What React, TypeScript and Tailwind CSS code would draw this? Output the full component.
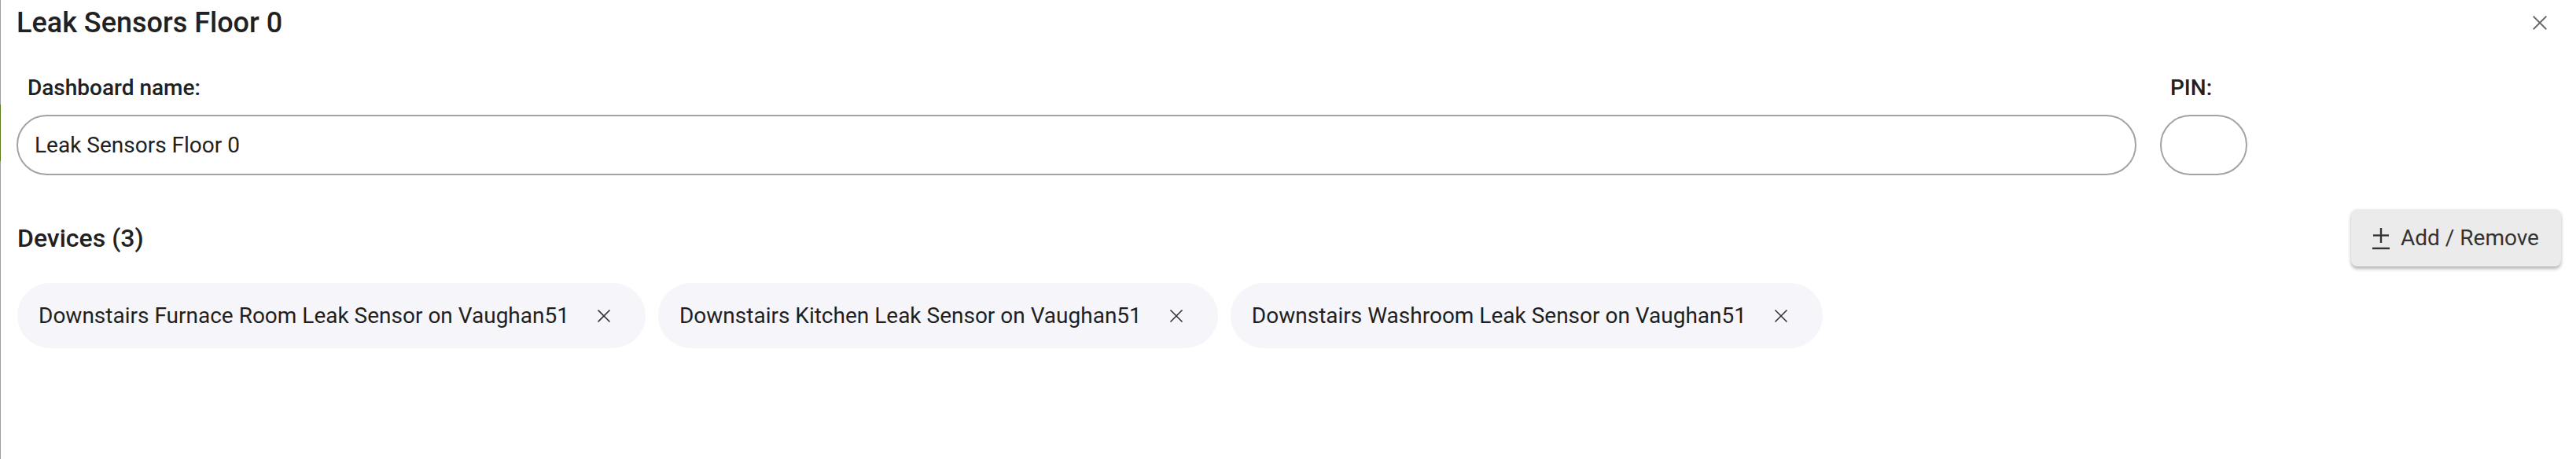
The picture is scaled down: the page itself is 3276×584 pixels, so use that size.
const devices = [
  "Downstairs Furnace Room Leak Sensor on Vaughan51",
  "Downstairs Kitchen Leak Sensor on Vaughan51",
  "Downstairs Washroom Leak Sensor on Vaughan51",
];

function CloseIcon({ className }: { className?: string }) {
  return (
    <svg viewBox="0 0 24 24" className={className} fill="none" stroke="currentColor" strokeWidth="2">
      <line x1="3" y1="3" x2="21" y2="21" />
      <line x1="21" y1="3" x2="3" y2="21" />
    </svg>
  );
}

function PlusMinusIcon() {
  return (
    <svg width="22" height="30" viewBox="0 0 22 30" fill="none" stroke="currentColor" strokeWidth="2.4">
      <line x1="11" y1="2" x2="11" y2="21" />
      <line x1="1" y1="11.5" x2="21" y2="11.5" />
      <line x1="0" y1="28" x2="22" y2="28" />
    </svg>
  );
}

function Chip({ label }: { label: string }) {
  return (
    <div className="flex h-[83px] items-center rounded-full bg-[#f6f6fa] pl-[27px] pr-[35px]">
      <span className="text-[28px] leading-[32px] text-[#1f1f1f]">{label}</span>
      <button className="ml-[26px] flex h-[36px] w-[36px] items-center justify-center text-[#333]" aria-label="Remove">
        <CloseIcon className="h-[20px] w-[20px]" />
      </button>
    </div>
  );
}

export default function App() {
  return (
    <div className="flex h-[584px] w-[3276px] bg-white font-['Roboto',sans-serif] text-[#212121]">
      <div className="flex w-px flex-col">
        <div className="h-[133px] bg-[#9e9e9e]" />
        <div className="h-[72px] bg-[#5b7f1e]" />
        <div className="flex-1 bg-[#9e9e9e]" />
      </div>

      <div className="flex flex-1 flex-col pl-[20px] pr-[19px]">
        <div className="mt-[9px] flex h-[40px] items-center justify-between">
          <h1 className="text-[36px] leading-[40px] font-medium">Leak Sensors Floor 0</h1>
          <button className="mr-[16px] text-[#666]" aria-label="Close">
            <CloseIcon className="h-[22px] w-[22px]" />
          </button>
        </div>

        <div className="mt-[47px] mr-[399px] grid grid-cols-[1fr_111px] gap-x-[30px]">
          <div className="flex flex-col">
            <label className="pl-[14px] text-[28px] leading-[32px] font-medium">Dashboard name:</label>
            <input
              defaultValue="Leak Sensors Floor 0"
              className="mt-[18px] h-[77px] rounded-full border-2 border-[#a3a3a3] pl-[21px] text-[28px] text-[#212121] outline-none"
            />
          </div>
          <div className="flex flex-col">
            <label className="pl-[13px] text-[28px] leading-[32px] font-medium">PIN:</label>
            <input className="mt-[18px] h-[77px] w-[111px] rounded-full border-2 border-[#a3a3a3] px-[16px] text-[28px] outline-none" />
          </div>
        </div>

        <div className="mt-[43px] flex h-[73px] items-center justify-between">
          <h2 className="pl-[1px] text-[32px] leading-[36px] font-medium">Devices ({devices.length})</h2>
          <button className="flex h-[73px] w-[267px] items-center rounded-[8px] bg-[#ebebeb] pl-[27px] text-[28px] text-[#333] shadow-[0_3px_4px_rgba(0,0,0,0.3)]">
            <PlusMinusIcon />
            <span className="ml-[14px]">Add / Remove</span>
          </button>
        </div>

        <div className="mt-[21px] flex flex-wrap gap-[16px] pl-[1px]">
          {devices.map((d) => (
            <Chip key={d} label={d} />
          ))}
        </div>
      </div>
    </div>
  );
}
